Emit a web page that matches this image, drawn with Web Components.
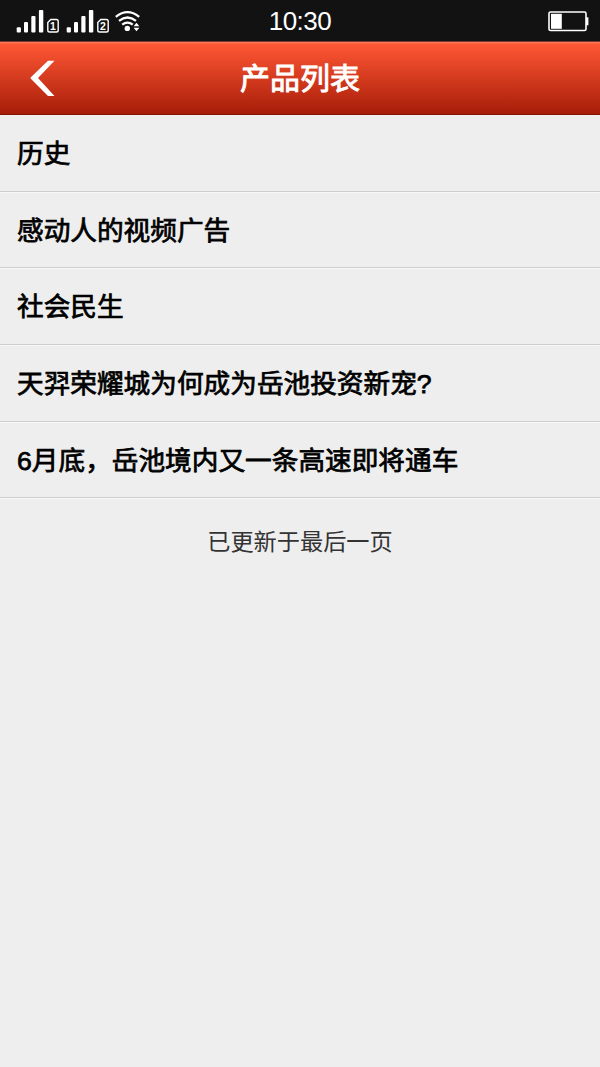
<!DOCTYPE html>
<html lang="zh-CN">
<head>
<meta charset="utf-8">
<title>产品列表</title>
<style>
html,body{margin:0;height:100%;background:#eee}
body{font-family:"Liberation Sans","Noto Sans CJK SC",sans-serif;overflow:hidden}
</style>
</head>
<body>
<product-page></product-page>
<script>
function define(name, html) {
  const template = document.createElement('template');
  template.innerHTML = html;
  customElements.define(name, class extends HTMLElement {
    constructor() {
      super();
      this.attachShadow({mode: 'open'}).append(template.content.cloneNode(true));
    }
  });
}

define('signal-icon', `
<style>:host{display:block;width:44px;height:26px}svg{display:block}</style>
<svg width="44" height="26" viewBox="0 0 44 26" fill="#fff">
  <rect x=".7" y="18.3" width="4.2" height="5.2" rx="1"/><rect x="8" y="13" width="4" height="10.5" rx="1"/>
  <rect x="15.3" y="7" width="4.2" height="16.5" rx="1"/><rect x="22.9" y="1" width="4.4" height="22.5" rx="1"/>
  <path d="M34.8 10.5h5.6q1.8 0 1.8 1.8v8.9q0 1.8-1.8 1.8h-6.8q-1.8 0-1.8-1.8v-7.7z" fill="none" stroke="#fff" stroke-width="1.4"/>
</svg>`);

define('sim-signal', `
<style>:host{display:grid;width:44px;height:26px}signal-icon,span{grid-area:1/1}
span{justify-self:end;align-self:end;width:10px;margin:0 2px 3px 0;text-align:center;font:bold 10.5px/12px "Liberation Sans",sans-serif;color:#fff}</style>
<signal-icon></signal-icon><span><slot></slot></span>`);

define('wifi-icon', `
<style>:host{display:block;width:26px;height:22px}svg{display:block}</style>
<svg width="26" height="22" viewBox="0 0 26 22" fill="none" stroke="#fff" stroke-width="2.2">
  <path d="M.8 5.8Q12.5-3.4 24.2 5.8M4 9.8Q12.5 3.2 21 9.8M7.2 13.7Q12.5 9.6 17.8 13.7"/>
  <circle cx="12.3" cy="17.4" r="2.7" fill="#fff" stroke="none"/>
  <path d="M18.6 15.2l2.9-3.4 2.9 3.4zM18.6 16.8l2.9 3.4 2.9-3.4z" fill="#fff" stroke="none"/>
</svg>`);

define('battery-icon', `
<style>:host{display:block;width:41px;height:21px}svg{display:block}</style>
<svg width="41" height="21" viewBox="0 0 41 21">
  <rect x="1" y="1" width="37" height="18.5" rx="1.5" fill="none" stroke="#fff" stroke-width="1.6"/>
  <rect x="3" y="2.8" width="10.8" height="15" fill="#fff"/><path d="M38 6.3h2.4v8H38z" fill="#fff"/>
</svg>`);

define('status-bar', `
<style>
:host{display:grid;grid-template-columns:1fr auto 1fr;height:41px;background:#121212;color:#fff}
.left{display:flex;padding-left:16px;padding-top:9px}
sim-signal+sim-signal{margin-left:6px}
wifi-icon{margin:2px 0 0 5px}
time{font-size:26px;line-height:42px;letter-spacing:-.5px}
battery-icon{justify-self:end;margin:10.5px 11px 0 0}
</style>
<div class="left"><sim-signal>1</sim-signal><sim-signal>2</sim-signal><wifi-icon></wifi-icon></div>
<time>10:30</time><battery-icon></battery-icon>`);

define('nav-header', `
<style>
:host{display:grid;grid-template-columns:100px 1fr 100px;height:74px;box-sizing:border-box;border-top:1px solid #753b32;border-bottom:1px solid #861503;background:linear-gradient(#ff7458 0 1px,#ff5734 2px,#a81e09 calc(100% - 1px),#9a1905);color:#fff}
svg{display:block;margin:18px 0 0 30px}
h1{margin:0;text-align:center;font-size:30px;line-height:74px;font-weight:400;-webkit-text-stroke:.9px currentColor}
</style>
<svg width="26" height="37" viewBox="0 0 26 37"><path d="M18 .8h6.5L8 18 24.5 36H18L.6 18.6v-1z" fill="#fff"/></svg>
<h1><slot></slot></h1>`);

define('product-item', `
<style>
:host{display:block;height:76.7px;box-sizing:border-box;padding-left:17px;border-bottom:1px solid #cecece;box-shadow:0 1px #f8f8f8;color:#000;font-size:26.67px;line-height:78px;white-space:nowrap;-webkit-text-stroke:.75px currentColor}
</style><slot></slot>`);

define('list-footer', `
<style>:host{display:block;text-align:center;font-size:23.2px;line-height:34px;padding-top:27px;color:#333}</style><slot></slot>`);

define('product-page', `
<style>:host{display:block;width:600px;height:1067px;background:#eee;overflow:hidden}</style>
<status-bar></status-bar>
<nav-header>产品列表</nav-header>
<main>
<product-item>历史</product-item>
<product-item>感动人的视频广告</product-item>
<product-item>社会民生</product-item>
<product-item>天羿荣耀城为何成为岳池投资新宠?</product-item>
<product-item>6月底，岳池境内又一条高速即将通车</product-item>
</main>
<list-footer>已更新于最后一页</list-footer>`);
</script>
</body>
</html>
